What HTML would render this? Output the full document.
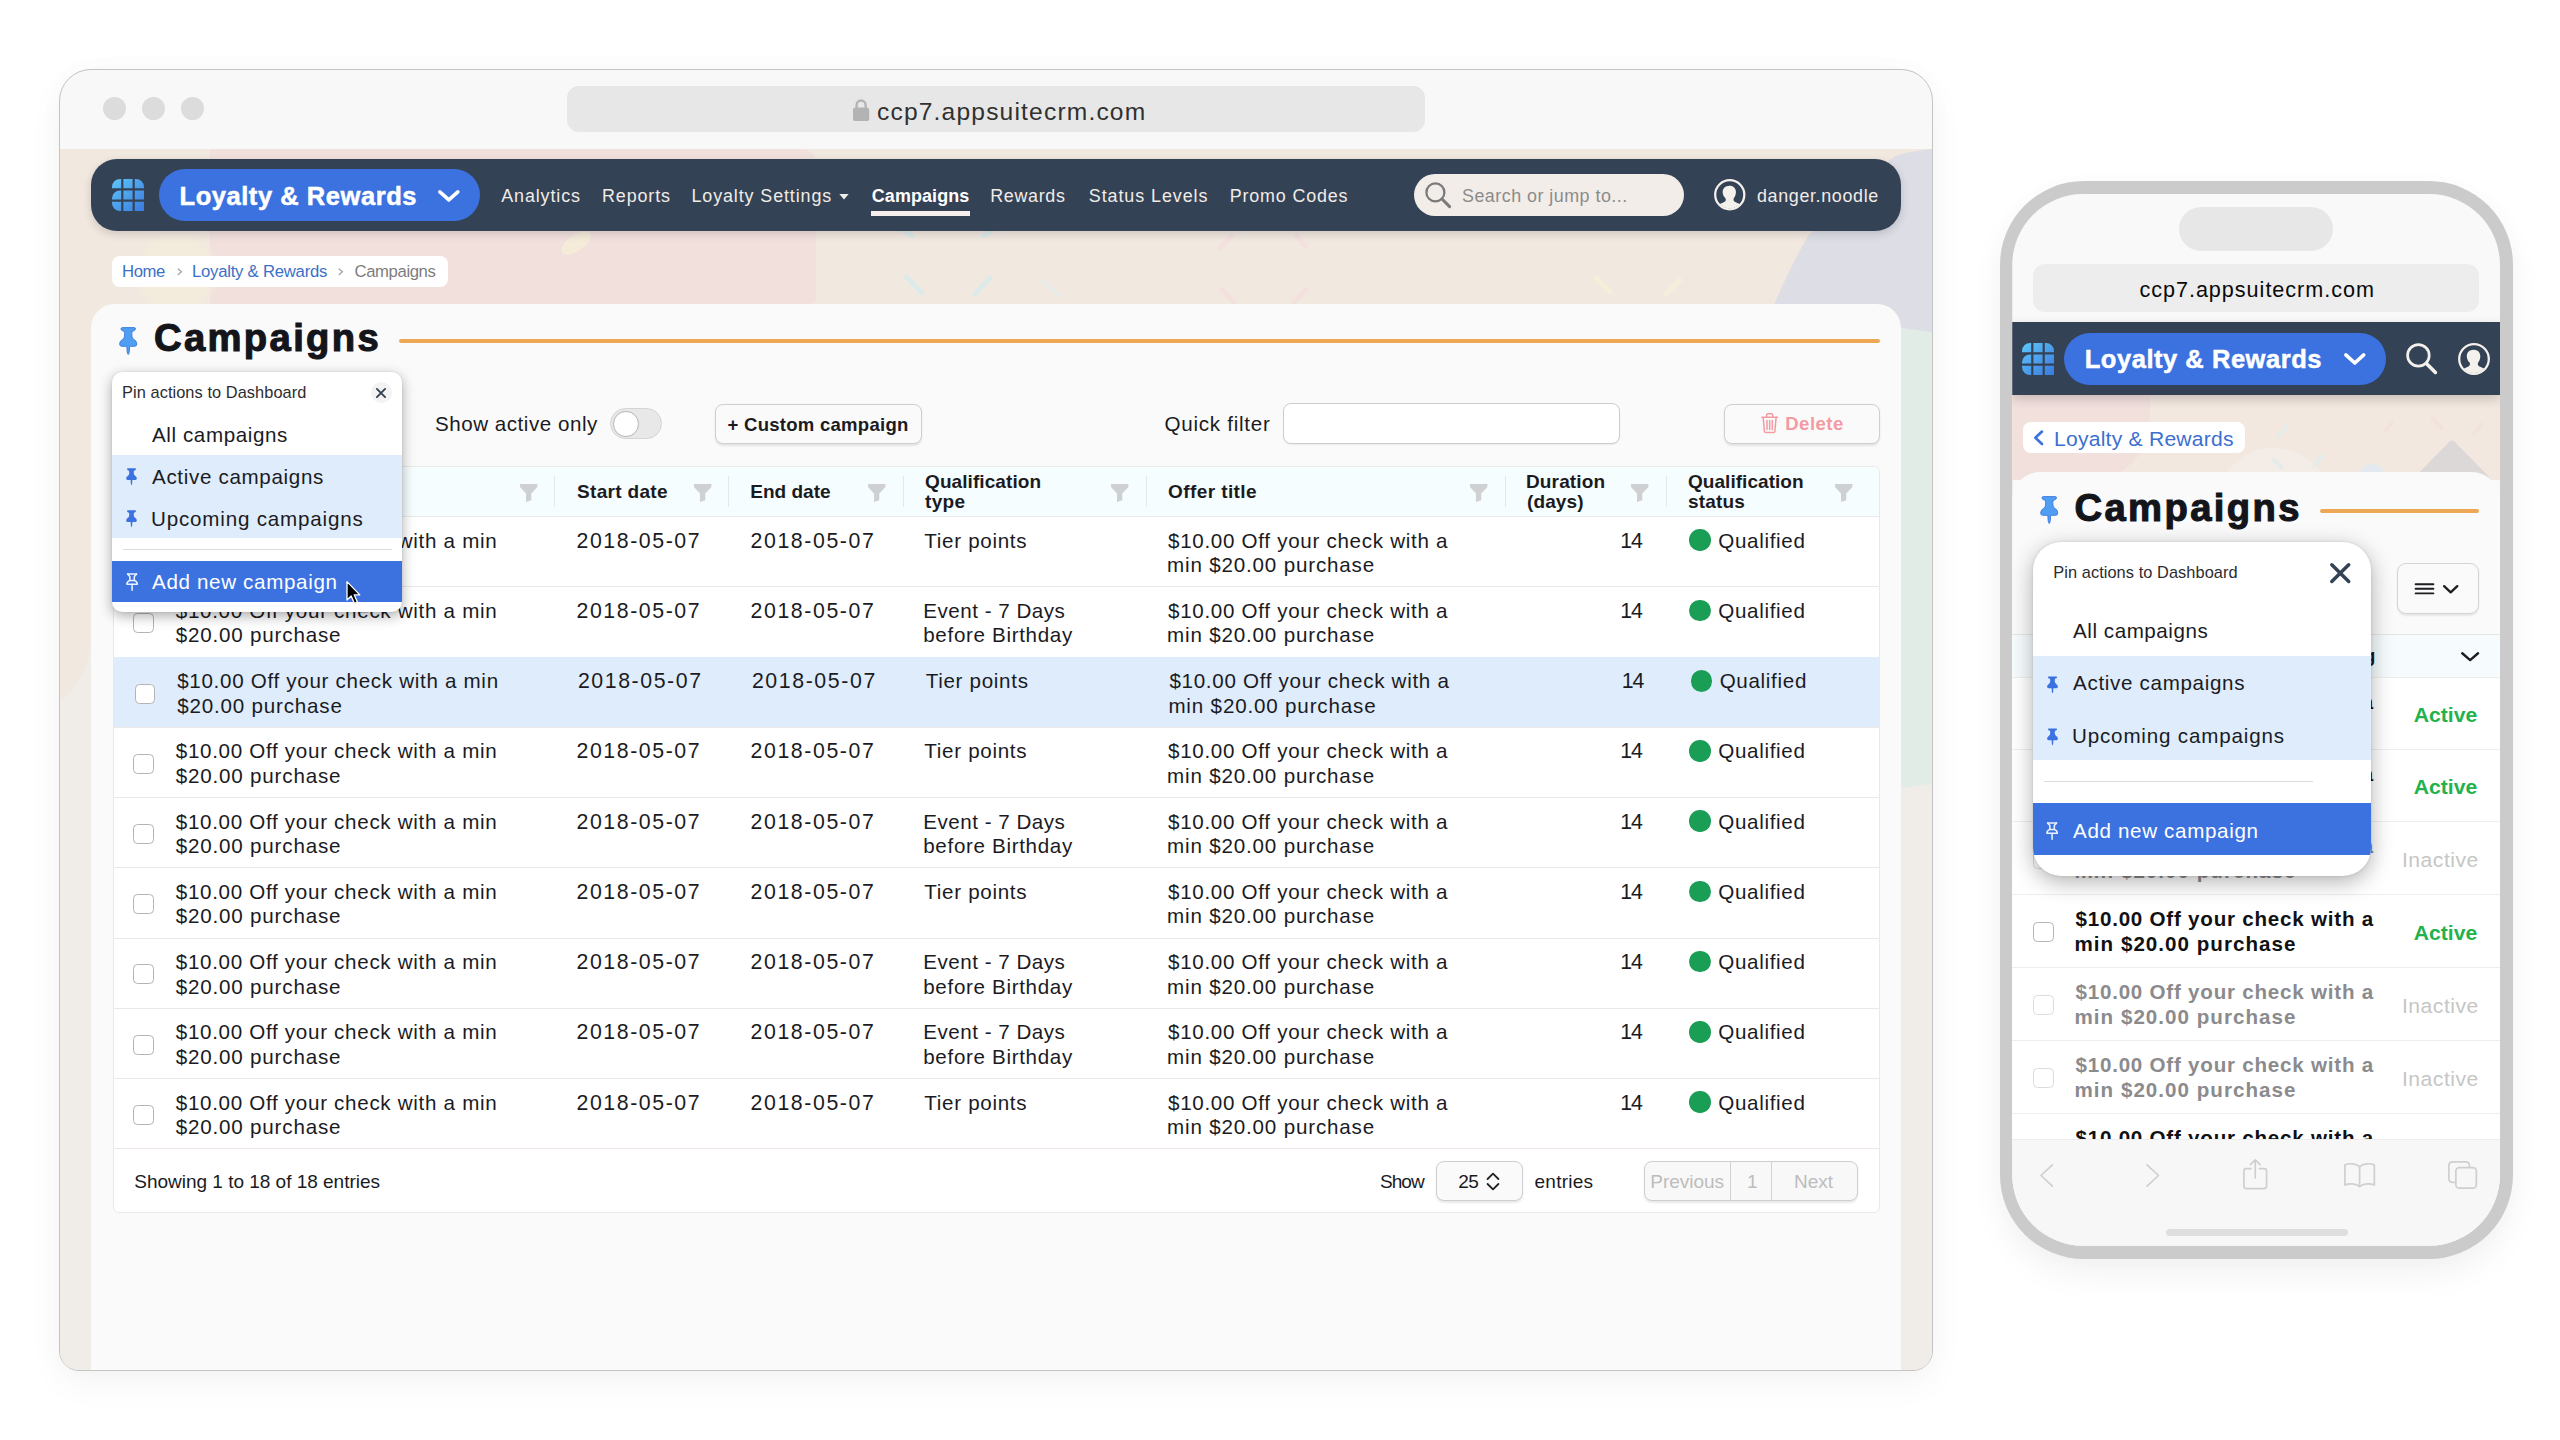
<!DOCTYPE html>
<html lang="en"><head><meta charset="utf-8"><title>Campaigns - Loyalty &amp; Rewards</title>
<style>
html,body{margin:0;padding:0;background:#fff;}
body{width:2560px;height:1440px;position:relative;overflow:hidden;font-family:"Liberation Sans",sans-serif;color:#1b1b1f;}
.b{position:absolute;box-sizing:border-box;}
.t{position:absolute;white-space:pre;line-height:1;}
svg{overflow:visible;display:block;}
</style></head><body>

<div class="b" style="left:59px;top:69px;width:1874px;height:1302px;border-radius:32px 32px 20px 20px;background:#f8f8f8;border:1.3px solid #c4c4c4;box-shadow:0 12px 36px rgba(0,0,0,.045),0 0 30px rgba(0,0,0,.02);overflow:hidden;">
<div class="b" style="left:-0.20px;top:78.80px;width:1873.00px;height:1222.00px;background:#f1e8df;"></div>
<svg class="b" style="left:-60.2px;top:-70.2px" width="1940" height="1380" viewBox="0 0 1940 1380"><path d="M60,700 C75,690 88,670 92,640 V1371 H60 Z" fill="#f0ece7"/><path d="M210,149 H800 Q816,149 816,165 V300 Q812,305 808,305 H210 Z" fill="#f2e0dd"/><defs><radialGradient id="yg"><stop offset="0.75" stop-color="#f3ecdc"/><stop offset="1" stop-color="#f3ecdc" stop-opacity="0"/></radialGradient></defs><circle cx="176" cy="274" r="44" fill="url(#yg)"/><ellipse cx="576" cy="243" rx="17" ry="8" transform="rotate(-35 576 243)" fill="#f4ecd9"/><g stroke="#dcebea" stroke-width="5" stroke-linecap="round"><path d="M906,277 L922,293"/><path d="M990,278 L975,294"/><path d="M905,232 L912,236"/><path d="M990,232 L984,236"/></g><g stroke="#e3ecea" stroke-width="2.5" stroke-linecap="round"><path d="M1043,281 L1060,297"/></g><g stroke="#f3e0df" stroke-width="5" stroke-linecap="round"><path d="M1232,235 L1220,248"/><path d="M1296,235 L1306,246"/><path d="M1222,290 L1234,302"/><path d="M1306,290 L1294,302"/></g><g stroke="#f6eedb" stroke-width="5" stroke-linecap="round"><path d="M1596,278 L1610,292"/><path d="M1680,280 L1666,294"/></g><path d="M1940,149 H1932 C1905,152 1896,155 1893,158 C1850,189 1825,219 1808,236 C1795,259 1785,279 1774,305 V349 H1940 Z" fill="#dddde5"/><path d="M1895,327 L1940,333 V783 L1895,789 Z" fill="#e2ece7"/><path d="M1895,789 L1940,783 V1380 H1895 Z" fill="#f0ece7"/></svg>
</div>
<div class="b" style="left:103.00px;top:97.25px;width:23.00px;height:23.00px;background:#dcdcdc;border-radius:50%;"></div>
<div class="b" style="left:142.00px;top:97.25px;width:23.00px;height:23.00px;background:#dcdcdc;border-radius:50%;"></div>
<div class="b" style="left:181.00px;top:97.25px;width:23.00px;height:23.00px;background:#dcdcdc;border-radius:50%;"></div>
<div class="b" style="left:567.00px;top:85.75px;width:857.50px;height:46.25px;background:#e7e7e7;border-radius:12px;"></div>
<svg class="b" style="left:852.60px;top:99.00px;" width="16.20" height="22.00" viewBox="0 0 16.2 22"><path d="M3.6,9 V6 A4.5,4.5 0 0 1 12.6,6 V9" fill="none" stroke="#b3b3b3" stroke-width="2.3"/><rect x="0" y="8.6" width="16.2" height="13.4" rx="2.6" fill="#b3b3b3"/></svg>
<span class="t" id="t0" style="left:877.00px;top:100.00px;font-size:24.6px;color:#303030;letter-spacing:1.166px;">ccp7.appsuitecrm.com</span>
<div class="b" style="left:91.00px;top:158.75px;width:1809.50px;height:72.00px;background:#344256;border-radius:26px;box-shadow:0 3px 8px rgba(30,30,40,.17);"></div>
<svg class="b" style="left:111.90px;top:179.00px;" width="32.00" height="32.00" viewBox="0 0 32 32"><defs><linearGradient id="gg111" x1="0" y1="0" x2="1" y2="1"><stop offset="0" stop-color="#5fc6f8"/><stop offset="1" stop-color="#3a7ae0"/></linearGradient></defs><path d="M8.0,0.0 H9.2 V9.2 H0.0 V8.0 A8,8 0 0 1 8.0,0.0 Z M11.399999999999999,0.0 H20.599999999999998 V9.2 H11.399999999999999 V0.0 Z M22.799999999999997,0.0 H23.999999999999996 A8,8 0 0 1 31.999999999999996,8.0 V9.2 H22.799999999999997 V0.0 Z M8.0,11.399999999999999 H9.2 V20.599999999999998 H0.0 V19.4 A8,8 0 0 1 8.0,11.399999999999999 Z M11.399999999999999,11.399999999999999 H20.599999999999998 V20.599999999999998 H11.399999999999999 V11.399999999999999 Z M22.799999999999997,11.399999999999999 H31.999999999999996 V20.599999999999998 H22.799999999999997 V11.399999999999999 Z M0.0,22.799999999999997 H9.2 V31.999999999999996 H8.0 A8,8 0 0 1 0.0,23.999999999999996 V22.799999999999997 Z M11.399999999999999,22.799999999999997 H20.599999999999998 V31.999999999999996 H11.399999999999999 V22.799999999999997 Z M22.799999999999997,22.799999999999997 H31.999999999999996 V31.999999999999996 H22.799999999999997 V22.799999999999997 Z" fill="url(#gg111)"/></svg>
<div class="b" style="left:159.00px;top:169.00px;width:321.00px;height:52.25px;background:#3b72df;border-radius:26.2px;"></div>
<span class="t" id="t1" style="left:179.50px;top:184.00px;font-size:25.5px;font-weight:700;color:#fff;letter-spacing:0.549px;-webkit-text-stroke:0.5px #fff;">Loyalty &amp; Rewards</span>
<svg class="b" style="left:434.90px;top:186.90px;" width="27.70" height="18.20" viewBox="-3.6 -3.6 27.7 18.2"><path d="M1.26,1.26 L10.25,9.2 L19.24,1.26" fill="none" stroke="#fff" stroke-width="3.6" stroke-linecap="round" stroke-linejoin="round"/></svg>
<span class="t" id="t2" style="left:501.25px;top:188.00px;font-size:17.92px;color:#f1ece7;letter-spacing:0.881px;">Analytics</span>
<span class="t" id="t3" style="left:602.00px;top:188.00px;font-size:17.92px;color:#f1ece7;letter-spacing:0.876px;">Reports</span>
<span class="t" id="t4" style="left:691.50px;top:188.00px;font-size:17.92px;color:#f1ece7;letter-spacing:0.886px;">Loyalty Settings</span>
<svg class="b" style="left:839.25px;top:193.90px;" width="10.00" height="5.60" viewBox="0 0 10 5.6"><path d="M0.3,0 H9.7 L5,5.6 Z" fill="#f1ece7"/></svg>
<span class="t" id="t5" style="left:871.75px;top:188.00px;font-size:17.92px;font-weight:700;color:#fff;letter-spacing:0.118px;">Campaigns</span>
<div class="b" style="left:871.00px;top:210.90px;width:99.00px;height:4.70px;background:#f6efee;"></div>
<span class="t" id="t6" style="left:990.25px;top:188.00px;font-size:17.92px;color:#f1ece7;letter-spacing:0.675px;">Rewards</span>
<span class="t" id="t7" style="left:1088.75px;top:188.00px;font-size:17.92px;color:#f1ece7;letter-spacing:0.934px;">Status Levels</span>
<span class="t" id="t8" style="left:1229.75px;top:188.00px;font-size:17.92px;color:#f1ece7;letter-spacing:0.823px;">Promo Codes</span>
<div class="b" style="left:1414.25px;top:174.00px;width:269.50px;height:42.00px;background:#f2ede9;border-radius:21px;"></div>
<svg class="b" style="left:1425.00px;top:182.00px;" width="26.00" height="26.00" viewBox="0 0 26 26"><circle cx="10.4" cy="10.4" r="9" fill="none" stroke="#7a7a7a" stroke-width="2.3"/><path d="M17,17 L24.6,24.6" stroke="#7a7a7a" stroke-width="3" stroke-linecap="round"/></svg>
<span class="t" id="t9" style="left:1462.00px;top:188.00px;font-size:17.92px;color:#8d8b89;letter-spacing:0.472px;">Search or jump to...</span>
<svg class="b" style="left:1714.30px;top:179.40px;" width="31.50" height="31.50" viewBox="0 0 32 32"><circle cx="16" cy="16" r="14.8" fill="#344256" stroke="#f4f0ec" stroke-width="2.3"/><clipPath id="uc1714"><circle cx="16" cy="16" r="14"/></clipPath><g clip-path="url(#uc1714)" fill="#f4f0ec"><path d="M15.6,6.8 C19.5,6.6 22.4,9.5 22.3,13.5 C22.2,16.5 21,18.5 20,19.8 C19.6,21.5 20,22.6 21.5,23.4 L26,25.4 C27,26 27.5,27 27.5,31 H4.5 C4.5,27 5,26 6,25.4 L10.5,23.4 C12,22.6 12.2,21.5 11.8,19.8 C10.4,18.5 8.9,16.5 8.8,13.5 C8.7,9.5 11.5,6.9 15.6,6.8 Z"/></g></svg>
<span class="t" id="t10" style="left:1757.00px;top:188.00px;font-size:17.92px;color:#f1ece7;letter-spacing:0.641px;">danger.noodle</span>
<div class="b" style="left:112.00px;top:256.25px;width:335.50px;height:30.75px;background:#fff;border-radius:8px;"></div>
<span class="t" id="t11" style="left:122.00px;top:264.00px;font-size:16.69px;color:#3b6fc6;letter-spacing:-0.411px;">Home</span>
<svg class="b" style="left:176.80px;top:268.20px;" width="5.40" height="7.60" viewBox="0 0 5.4 7.6"><path d="M0.8,0.7 L4.4,3.8 L0.8,6.9" fill="none" stroke="#a3a3a3" stroke-width="1.3"/></svg>
<span class="t" id="t12" style="left:192.00px;top:264.00px;font-size:16.69px;color:#3b6fc6;letter-spacing:-0.236px;">Loyalty &amp; Rewards</span>
<svg class="b" style="left:338.00px;top:268.20px;" width="5.40" height="7.60" viewBox="0 0 5.4 7.6"><path d="M0.8,0.7 L4.4,3.8 L0.8,6.9" fill="none" stroke="#a3a3a3" stroke-width="1.3"/></svg>
<span class="t" id="t13" style="left:354.50px;top:264.00px;font-size:16.69px;color:#7d7d7d;letter-spacing:-0.383px;">Campaigns</span>
<div class="b" style="left:91.25px;top:304.00px;width:1809.25px;height:1066.20px;background:#fafafa;border-radius:24px 24px 0 0;"></div>
<svg class="b" style="left:119.00px;top:326.90px;" width="18.45" height="28.10" viewBox="-0.6 -0.6 18.4 28.2"><path d="M3,0 H14.5 Q16.2,0 15.8,1.6 Q15.4,3 13.6,3.4 Q12.1,3.7 12.2,6 L12.4,9 Q12.6,11 14.5,12 Q17.2,13.5 17.2,16.5 Q17.2,18.8 15,18.8 H10 L9.7,24 Q9.1,27 8.6,27 Q8.1,27 7.5,24 L7.2,18.8 H2.2 Q0,18.8 0,16.5 Q0,13.5 2.7,12 Q4.6,11 4.8,9 L5,6 Q5.1,3.7 3.6,3.4 Q1.8,3 1.4,1.6 Q1,0 3,0 Z" fill="#4f9ef1" stroke="#3b78e0" stroke-width="0.9" stroke-linejoin="round"/></svg>
<span class="t" id="t14" style="left:154.00px;top:319.00px;font-size:38.2px;font-weight:700;color:#14141b;letter-spacing:2.363px;-webkit-text-stroke:1.1px #14141b;">Campaigns</span>
<div class="b" style="left:399.25px;top:339.30px;width:1480.75px;height:3.80px;background:#eda855;border-radius:2px;"></div>
<span class="t" id="t15" style="left:435.00px;top:414.00px;font-size:20.6px;letter-spacing:0.518px;">Show active only</span>
<div class="b" style="left:610.40px;top:408.30px;width:51.40px;height:30.90px;background:#e8e8e8;border-radius:15.5px;border:1.3px solid #d4d4d4;"></div>
<div class="b" style="left:613.20px;top:411.00px;width:25.70px;height:25.70px;background:#fff;border-radius:50%;border:1.2px solid #b4b4b4;"></div>
<div class="b" style="left:714.50px;top:403.75px;width:207.00px;height:40.25px;background:#fafafa;border-radius:8px;border:1.2px solid #cfcfcf;box-shadow:0 1.5px 2px rgba(0,0,0,.09);"></div>
<span class="t" id="t16" style="left:727.50px;top:416.00px;font-size:18.54px;font-weight:700;letter-spacing:0.264px;">+ Custom campaign</span>
<span class="t" id="t17" style="left:1164.50px;top:414.00px;font-size:20.6px;letter-spacing:0.736px;">Quick filter</span>
<div class="b" style="left:1282.50px;top:403.25px;width:337.00px;height:41.00px;background:#fff;border-radius:8px;border:1.2px solid #cdcdcd;box-shadow:0 1px 1.5px rgba(0,0,0,.06);"></div>
<div class="b" style="left:1724.25px;top:403.75px;width:155.25px;height:40.25px;background:#fafafa;border-radius:8px;border:1.2px solid #cfcfcf;box-shadow:0 1.5px 2px rgba(0,0,0,.09);"></div>
<svg class="b" style="left:1761.00px;top:412.90px;" width="17.30" height="20.40" viewBox="0 0 17.3 20.4"><g fill="none" stroke="#f29ba3" stroke-width="1.5" stroke-linecap="round" stroke-linejoin="round"><path d="M0.8,4.3 H16.5"/><path d="M5.6,4 V2.2 Q5.6,0.8 7,0.8 H10.3 Q11.7,0.8 11.7,2.2 V4"/><path d="M2.2,4.6 L3.4,18.2 Q3.5,19.6 4.9,19.6 H12.4 Q13.8,19.6 13.9,18.2 L15.1,4.6"/><path d="M6,7.6 V16.4 M8.65,7.6 V16.4 M11.3,7.6 V16.4"/></g></svg>
<span class="t" id="t18" style="left:1785.25px;top:415.00px;font-size:18.54px;font-weight:700;color:#f29ba3;letter-spacing:0.487px;">Delete</span>
<div class="b" style="left:112.50px;top:466.00px;width:1767.00px;height:746.50px;background:#fff;border-radius:6px;border:1px solid #e9e9e9;"></div>
<div class="b" style="left:113.50px;top:467.00px;width:1765.00px;height:50.20px;background:#f6fdfe;border-radius:5px 5px 0 0;border-bottom:1px solid #e7ebeb;"></div>
<span class="t" id="t19" style="left:577.00px;top:482.00px;font-size:19.05px;font-weight:700;letter-spacing:0.312px;">Start date</span>
<span class="t" id="t20" style="left:750.25px;top:482.00px;font-size:19.05px;font-weight:700;">End date</span>
<span class="t" id="t21" style="left:925.00px;top:472.00px;font-size:19.05px;font-weight:700;letter-spacing:0.072px;">Qualification</span>
<span class="t" id="t22" style="left:925.00px;top:492.00px;font-size:19.05px;font-weight:700;letter-spacing:0.318px;">type</span>
<span class="t" id="t23" style="left:1168.00px;top:482.00px;font-size:19.05px;font-weight:700;letter-spacing:0.399px;">Offer title</span>
<span class="t" id="t24" style="left:1526.00px;top:472.00px;font-size:19.05px;font-weight:700;letter-spacing:0.127px;">Duration</span>
<span class="t" id="t25" style="left:1527.00px;top:492.00px;font-size:19.05px;font-weight:700;letter-spacing:0.107px;">(days)</span>
<span class="t" id="t26" style="left:1688.00px;top:472.00px;font-size:19.05px;font-weight:700;letter-spacing:0.031px;">Qualification</span>
<span class="t" id="t27" style="left:1688.00px;top:492.00px;font-size:19.05px;font-weight:700;letter-spacing:0.156px;">status</span>
<svg class="b" style="left:520.00px;top:483.90px;" width="17.50" height="18.50" viewBox="0 0 17.5 18.5"><path d="M0.4,0 H17 Q17.4,0 17.4,0.6 V3 L11.3,9.6 V16.2 L6,18 V9.6 L0,3 V0.6 Q0,0 0.4,0 Z" fill="#cfd0d2"/></svg>
<svg class="b" style="left:694.00px;top:483.90px;" width="17.50" height="18.50" viewBox="0 0 17.5 18.5"><path d="M0.4,0 H17 Q17.4,0 17.4,0.6 V3 L11.3,9.6 V16.2 L6,18 V9.6 L0,3 V0.6 Q0,0 0.4,0 Z" fill="#cfd0d2"/></svg>
<svg class="b" style="left:868.00px;top:483.90px;" width="17.50" height="18.50" viewBox="0 0 17.5 18.5"><path d="M0.4,0 H17 Q17.4,0 17.4,0.6 V3 L11.3,9.6 V16.2 L6,18 V9.6 L0,3 V0.6 Q0,0 0.4,0 Z" fill="#cfd0d2"/></svg>
<svg class="b" style="left:1111.25px;top:483.90px;" width="17.50" height="18.50" viewBox="0 0 17.5 18.5"><path d="M0.4,0 H17 Q17.4,0 17.4,0.6 V3 L11.3,9.6 V16.2 L6,18 V9.6 L0,3 V0.6 Q0,0 0.4,0 Z" fill="#cfd0d2"/></svg>
<svg class="b" style="left:1469.50px;top:483.90px;" width="17.50" height="18.50" viewBox="0 0 17.5 18.5"><path d="M0.4,0 H17 Q17.4,0 17.4,0.6 V3 L11.3,9.6 V16.2 L6,18 V9.6 L0,3 V0.6 Q0,0 0.4,0 Z" fill="#cfd0d2"/></svg>
<svg class="b" style="left:1630.50px;top:483.90px;" width="17.50" height="18.50" viewBox="0 0 17.5 18.5"><path d="M0.4,0 H17 Q17.4,0 17.4,0.6 V3 L11.3,9.6 V16.2 L6,18 V9.6 L0,3 V0.6 Q0,0 0.4,0 Z" fill="#cfd0d2"/></svg>
<svg class="b" style="left:1835.00px;top:483.90px;" width="17.50" height="18.50" viewBox="0 0 17.5 18.5"><path d="M0.4,0 H17 Q17.4,0 17.4,0.6 V3 L11.3,9.6 V16.2 L6,18 V9.6 L0,3 V0.6 Q0,0 0.4,0 Z" fill="#cfd0d2"/></svg>
<div class="b" style="left:554.00px;top:476.00px;width:1.10px;height:31.00px;background:#e2e9e9;"></div>
<div class="b" style="left:728.25px;top:476.00px;width:1.10px;height:31.00px;background:#e2e9e9;"></div>
<div class="b" style="left:902.50px;top:476.00px;width:1.10px;height:31.00px;background:#e2e9e9;"></div>
<div class="b" style="left:1145.50px;top:476.00px;width:1.10px;height:31.00px;background:#e2e9e9;"></div>
<div class="b" style="left:1504.50px;top:476.00px;width:1.10px;height:31.00px;background:#e2e9e9;"></div>
<div class="b" style="left:1665.75px;top:476.00px;width:1.10px;height:31.00px;background:#e2e9e9;"></div>
<div class="b" style="left:133.25px;top:542.75px;width:20.60px;height:20.20px;background:#fff;border-radius:4.5px;border:1.4px solid #b4b4b4;box-sizing:border-box;"></div>
<span class="t" id="t28" style="left:175.75px;top:531.00px;font-size:20.6px;letter-spacing:0.691px;">$10.00 Off your check with a min</span>
<span class="t" id="t29" style="left:175.75px;top:555.00px;font-size:20.6px;letter-spacing:0.805px;">$20.00 purchase</span>
<span class="t" id="t30" style="left:576.50px;top:531.00px;font-size:21.3px;letter-spacing:1.573px;">2018-05-07</span>
<span class="t" id="t31" style="left:750.50px;top:531.00px;font-size:21.3px;letter-spacing:1.601px;">2018-05-07</span>
<span class="t" id="t32" style="left:924.25px;top:531.00px;font-size:20.6px;letter-spacing:0.692px;">Tier points</span>
<span class="t" id="t33" style="left:1168.00px;top:531.00px;font-size:20.6px;letter-spacing:0.698px;">$10.00 Off your check with a</span>
<span class="t" id="t34" style="left:1167.00px;top:555.00px;font-size:20.6px;letter-spacing:0.826px;">min $20.00 purchase</span>
<span class="t" id="t35" style="left:1620.25px;top:531.00px;font-size:21.3px;letter-spacing:-1.094px;">14</span>
<div class="b" style="left:1689.25px;top:529.25px;width:21.50px;height:21.50px;background:#1a9d55;border-radius:50%;"></div>
<span class="t" id="t36" style="left:1718.25px;top:531.00px;font-size:20.6px;letter-spacing:0.678px;">Qualified</span>
<div class="b" style="left:113.50px;top:586.30px;width:1765.00px;height:1.10px;background:#ece8e5;"></div>
<div class="b" style="left:133.25px;top:613.00px;width:20.60px;height:20.20px;background:#fff;border-radius:4.5px;border:1.4px solid #b4b4b4;box-sizing:border-box;"></div>
<span class="t" id="t37" style="left:175.75px;top:601.00px;font-size:20.6px;letter-spacing:0.691px;">$10.00 Off your check with a min</span>
<span class="t" id="t38" style="left:175.75px;top:625.00px;font-size:20.6px;letter-spacing:0.805px;">$20.00 purchase</span>
<span class="t" id="t39" style="left:576.50px;top:601.00px;font-size:21.3px;letter-spacing:1.573px;">2018-05-07</span>
<span class="t" id="t40" style="left:750.50px;top:601.00px;font-size:21.3px;letter-spacing:1.601px;">2018-05-07</span>
<span class="t" id="t41" style="left:923.25px;top:601.00px;font-size:20.6px;letter-spacing:0.499px;">Event - 7 Days</span>
<span class="t" id="t42" style="left:923.25px;top:625.00px;font-size:20.6px;letter-spacing:0.670px;">before Birthday</span>
<span class="t" id="t43" style="left:1168.00px;top:601.00px;font-size:20.6px;letter-spacing:0.698px;">$10.00 Off your check with a</span>
<span class="t" id="t44" style="left:1167.00px;top:625.00px;font-size:20.6px;letter-spacing:0.826px;">min $20.00 purchase</span>
<span class="t" id="t45" style="left:1620.25px;top:601.00px;font-size:21.3px;letter-spacing:-1.094px;">14</span>
<div class="b" style="left:1689.25px;top:599.50px;width:21.50px;height:21.50px;background:#1a9d55;border-radius:50%;"></div>
<span class="t" id="t46" style="left:1718.25px;top:601.00px;font-size:20.6px;letter-spacing:0.678px;">Qualified</span>
<div class="b" style="left:113.50px;top:657.25px;width:1765.00px;height:70.10px;background:#deecfc;"></div>
<div class="b" style="left:134.65px;top:683.65px;width:20.60px;height:20.20px;background:#fff;border-radius:4.5px;border:1.4px solid #b4b4b4;box-sizing:border-box;"></div>
<span class="t" id="t47" style="left:177.15px;top:671.00px;font-size:20.6px;letter-spacing:0.691px;">$10.00 Off your check with a min</span>
<span class="t" id="t48" style="left:177.15px;top:696.00px;font-size:20.6px;letter-spacing:0.805px;">$20.00 purchase</span>
<span class="t" id="t49" style="left:577.90px;top:671.00px;font-size:21.3px;letter-spacing:1.573px;">2018-05-07</span>
<span class="t" id="t50" style="left:751.90px;top:671.00px;font-size:21.3px;letter-spacing:1.601px;">2018-05-07</span>
<span class="t" id="t51" style="left:925.65px;top:671.00px;font-size:20.6px;letter-spacing:0.692px;">Tier points</span>
<span class="t" id="t52" style="left:1169.40px;top:671.00px;font-size:20.6px;letter-spacing:0.698px;">$10.00 Off your check with a</span>
<span class="t" id="t53" style="left:1168.40px;top:696.00px;font-size:20.6px;letter-spacing:0.826px;">min $20.00 purchase</span>
<span class="t" id="t54" style="left:1621.65px;top:671.00px;font-size:21.3px;letter-spacing:-1.094px;">14</span>
<div class="b" style="left:1690.65px;top:670.15px;width:21.50px;height:21.50px;background:#1a9d55;border-radius:50%;"></div>
<span class="t" id="t55" style="left:1719.65px;top:671.00px;font-size:20.6px;letter-spacing:0.678px;">Qualified</span>
<div class="b" style="left:113.50px;top:726.80px;width:1765.00px;height:1.10px;background:#ece8e5;"></div>
<div class="b" style="left:133.25px;top:753.50px;width:20.60px;height:20.20px;background:#fff;border-radius:4.5px;border:1.4px solid #b4b4b4;box-sizing:border-box;"></div>
<span class="t" id="t56" style="left:175.75px;top:741.00px;font-size:20.6px;letter-spacing:0.691px;">$10.00 Off your check with a min</span>
<span class="t" id="t57" style="left:175.75px;top:766.00px;font-size:20.6px;letter-spacing:0.805px;">$20.00 purchase</span>
<span class="t" id="t58" style="left:576.50px;top:741.00px;font-size:21.3px;letter-spacing:1.573px;">2018-05-07</span>
<span class="t" id="t59" style="left:750.50px;top:741.00px;font-size:21.3px;letter-spacing:1.601px;">2018-05-07</span>
<span class="t" id="t60" style="left:924.25px;top:741.00px;font-size:20.6px;letter-spacing:0.692px;">Tier points</span>
<span class="t" id="t61" style="left:1168.00px;top:741.00px;font-size:20.6px;letter-spacing:0.698px;">$10.00 Off your check with a</span>
<span class="t" id="t62" style="left:1167.00px;top:766.00px;font-size:20.6px;letter-spacing:0.826px;">min $20.00 purchase</span>
<span class="t" id="t63" style="left:1620.25px;top:741.00px;font-size:21.3px;letter-spacing:-1.094px;">14</span>
<div class="b" style="left:1689.25px;top:740.00px;width:21.50px;height:21.50px;background:#1a9d55;border-radius:50%;"></div>
<span class="t" id="t64" style="left:1718.25px;top:741.00px;font-size:20.6px;letter-spacing:0.678px;">Qualified</span>
<div class="b" style="left:113.50px;top:797.05px;width:1765.00px;height:1.10px;background:#ece8e5;"></div>
<div class="b" style="left:133.25px;top:823.75px;width:20.60px;height:20.20px;background:#fff;border-radius:4.5px;border:1.4px solid #b4b4b4;box-sizing:border-box;"></div>
<span class="t" id="t65" style="left:175.75px;top:812.00px;font-size:20.6px;letter-spacing:0.691px;">$10.00 Off your check with a min</span>
<span class="t" id="t66" style="left:175.75px;top:836.00px;font-size:20.6px;letter-spacing:0.805px;">$20.00 purchase</span>
<span class="t" id="t67" style="left:576.50px;top:812.00px;font-size:21.3px;letter-spacing:1.573px;">2018-05-07</span>
<span class="t" id="t68" style="left:750.50px;top:812.00px;font-size:21.3px;letter-spacing:1.601px;">2018-05-07</span>
<span class="t" id="t69" style="left:923.25px;top:812.00px;font-size:20.6px;letter-spacing:0.499px;">Event - 7 Days</span>
<span class="t" id="t70" style="left:923.25px;top:836.00px;font-size:20.6px;letter-spacing:0.670px;">before Birthday</span>
<span class="t" id="t71" style="left:1168.00px;top:812.00px;font-size:20.6px;letter-spacing:0.698px;">$10.00 Off your check with a</span>
<span class="t" id="t72" style="left:1167.00px;top:836.00px;font-size:20.6px;letter-spacing:0.826px;">min $20.00 purchase</span>
<span class="t" id="t73" style="left:1620.25px;top:812.00px;font-size:21.3px;letter-spacing:-1.094px;">14</span>
<div class="b" style="left:1689.25px;top:810.25px;width:21.50px;height:21.50px;background:#1a9d55;border-radius:50%;"></div>
<span class="t" id="t74" style="left:1718.25px;top:812.00px;font-size:20.6px;letter-spacing:0.678px;">Qualified</span>
<div class="b" style="left:113.50px;top:867.30px;width:1765.00px;height:1.10px;background:#ece8e5;"></div>
<div class="b" style="left:133.25px;top:894.00px;width:20.60px;height:20.20px;background:#fff;border-radius:4.5px;border:1.4px solid #b4b4b4;box-sizing:border-box;"></div>
<span class="t" id="t75" style="left:175.75px;top:882.00px;font-size:20.6px;letter-spacing:0.691px;">$10.00 Off your check with a min</span>
<span class="t" id="t76" style="left:175.75px;top:906.00px;font-size:20.6px;letter-spacing:0.805px;">$20.00 purchase</span>
<span class="t" id="t77" style="left:576.50px;top:882.00px;font-size:21.3px;letter-spacing:1.573px;">2018-05-07</span>
<span class="t" id="t78" style="left:750.50px;top:882.00px;font-size:21.3px;letter-spacing:1.601px;">2018-05-07</span>
<span class="t" id="t79" style="left:924.25px;top:882.00px;font-size:20.6px;letter-spacing:0.692px;">Tier points</span>
<span class="t" id="t80" style="left:1168.00px;top:882.00px;font-size:20.6px;letter-spacing:0.698px;">$10.00 Off your check with a</span>
<span class="t" id="t81" style="left:1167.00px;top:906.00px;font-size:20.6px;letter-spacing:0.826px;">min $20.00 purchase</span>
<span class="t" id="t82" style="left:1620.25px;top:882.00px;font-size:21.3px;letter-spacing:-1.094px;">14</span>
<div class="b" style="left:1689.25px;top:880.50px;width:21.50px;height:21.50px;background:#1a9d55;border-radius:50%;"></div>
<span class="t" id="t83" style="left:1718.25px;top:882.00px;font-size:20.6px;letter-spacing:0.678px;">Qualified</span>
<div class="b" style="left:113.50px;top:937.55px;width:1765.00px;height:1.10px;background:#ece8e5;"></div>
<div class="b" style="left:133.25px;top:964.25px;width:20.60px;height:20.20px;background:#fff;border-radius:4.5px;border:1.4px solid #b4b4b4;box-sizing:border-box;"></div>
<span class="t" id="t84" style="left:175.75px;top:952.00px;font-size:20.6px;letter-spacing:0.691px;">$10.00 Off your check with a min</span>
<span class="t" id="t85" style="left:175.75px;top:977.00px;font-size:20.6px;letter-spacing:0.805px;">$20.00 purchase</span>
<span class="t" id="t86" style="left:576.50px;top:952.00px;font-size:21.3px;letter-spacing:1.573px;">2018-05-07</span>
<span class="t" id="t87" style="left:750.50px;top:952.00px;font-size:21.3px;letter-spacing:1.601px;">2018-05-07</span>
<span class="t" id="t88" style="left:923.25px;top:952.00px;font-size:20.6px;letter-spacing:0.499px;">Event - 7 Days</span>
<span class="t" id="t89" style="left:923.25px;top:977.00px;font-size:20.6px;letter-spacing:0.670px;">before Birthday</span>
<span class="t" id="t90" style="left:1168.00px;top:952.00px;font-size:20.6px;letter-spacing:0.698px;">$10.00 Off your check with a</span>
<span class="t" id="t91" style="left:1167.00px;top:977.00px;font-size:20.6px;letter-spacing:0.826px;">min $20.00 purchase</span>
<span class="t" id="t92" style="left:1620.25px;top:952.00px;font-size:21.3px;letter-spacing:-1.094px;">14</span>
<div class="b" style="left:1689.25px;top:950.75px;width:21.50px;height:21.50px;background:#1a9d55;border-radius:50%;"></div>
<span class="t" id="t93" style="left:1718.25px;top:952.00px;font-size:20.6px;letter-spacing:0.678px;">Qualified</span>
<div class="b" style="left:113.50px;top:1007.80px;width:1765.00px;height:1.10px;background:#ece8e5;"></div>
<div class="b" style="left:133.25px;top:1034.50px;width:20.60px;height:20.20px;background:#fff;border-radius:4.5px;border:1.4px solid #b4b4b4;box-sizing:border-box;"></div>
<span class="t" id="t94" style="left:175.75px;top:1022.00px;font-size:20.6px;letter-spacing:0.691px;">$10.00 Off your check with a min</span>
<span class="t" id="t95" style="left:175.75px;top:1047.00px;font-size:20.6px;letter-spacing:0.805px;">$20.00 purchase</span>
<span class="t" id="t96" style="left:576.50px;top:1022.00px;font-size:21.3px;letter-spacing:1.573px;">2018-05-07</span>
<span class="t" id="t97" style="left:750.50px;top:1022.00px;font-size:21.3px;letter-spacing:1.601px;">2018-05-07</span>
<span class="t" id="t98" style="left:923.25px;top:1022.00px;font-size:20.6px;letter-spacing:0.499px;">Event - 7 Days</span>
<span class="t" id="t99" style="left:923.25px;top:1047.00px;font-size:20.6px;letter-spacing:0.670px;">before Birthday</span>
<span class="t" id="t100" style="left:1168.00px;top:1022.00px;font-size:20.6px;letter-spacing:0.698px;">$10.00 Off your check with a</span>
<span class="t" id="t101" style="left:1167.00px;top:1047.00px;font-size:20.6px;letter-spacing:0.826px;">min $20.00 purchase</span>
<span class="t" id="t102" style="left:1620.25px;top:1022.00px;font-size:21.3px;letter-spacing:-1.094px;">14</span>
<div class="b" style="left:1689.25px;top:1021.00px;width:21.50px;height:21.50px;background:#1a9d55;border-radius:50%;"></div>
<span class="t" id="t103" style="left:1718.25px;top:1022.00px;font-size:20.6px;letter-spacing:0.678px;">Qualified</span>
<div class="b" style="left:113.50px;top:1078.05px;width:1765.00px;height:1.10px;background:#ece8e5;"></div>
<div class="b" style="left:133.25px;top:1104.75px;width:20.60px;height:20.20px;background:#fff;border-radius:4.5px;border:1.4px solid #b4b4b4;box-sizing:border-box;"></div>
<span class="t" id="t104" style="left:175.75px;top:1093.00px;font-size:20.6px;letter-spacing:0.691px;">$10.00 Off your check with a min</span>
<span class="t" id="t105" style="left:175.75px;top:1117.00px;font-size:20.6px;letter-spacing:0.805px;">$20.00 purchase</span>
<span class="t" id="t106" style="left:576.50px;top:1093.00px;font-size:21.3px;letter-spacing:1.573px;">2018-05-07</span>
<span class="t" id="t107" style="left:750.50px;top:1093.00px;font-size:21.3px;letter-spacing:1.601px;">2018-05-07</span>
<span class="t" id="t108" style="left:924.25px;top:1093.00px;font-size:20.6px;letter-spacing:0.692px;">Tier points</span>
<span class="t" id="t109" style="left:1168.00px;top:1093.00px;font-size:20.6px;letter-spacing:0.698px;">$10.00 Off your check with a</span>
<span class="t" id="t110" style="left:1167.00px;top:1117.00px;font-size:20.6px;letter-spacing:0.826px;">min $20.00 purchase</span>
<span class="t" id="t111" style="left:1620.25px;top:1093.00px;font-size:21.3px;letter-spacing:-1.094px;">14</span>
<div class="b" style="left:1689.25px;top:1091.25px;width:21.50px;height:21.50px;background:#1a9d55;border-radius:50%;"></div>
<span class="t" id="t112" style="left:1718.25px;top:1093.00px;font-size:20.6px;letter-spacing:0.678px;">Qualified</span>
<div class="b" style="left:113.50px;top:1148.40px;width:1765.00px;height:1.10px;background:#efe7e3;"></div>
<span class="t" id="t113" style="left:134.25px;top:1172.00px;font-size:19.05px;letter-spacing:-0.027px;">Showing 1 to 18 of 18 entries</span>
<span class="t" id="t114" style="left:1380.00px;top:1172.00px;font-size:19.05px;letter-spacing:-0.954px;">Show</span>
<div class="b" style="left:1435.75px;top:1160.50px;width:87.50px;height:40.25px;background:#fafafa;border-radius:8px;border:1.2px solid #cfcfcf;box-shadow:0 1.5px 2px rgba(0,0,0,.09);"></div>
<span class="t" id="t115" style="left:1458.25px;top:1172.00px;font-size:19.05px;letter-spacing:-0.584px;">25</span>
<svg class="b" style="left:1486.00px;top:1172.00px;" width="14.00" height="19.00" viewBox="0 0 14 19"><path d="M1.6,7 L7,1.6 L12.4,7 M1.6,12 L7,17.4 L12.4,12" fill="none" stroke="#222" stroke-width="1.8" stroke-linecap="round" stroke-linejoin="round"/></svg>
<span class="t" id="t116" style="left:1534.50px;top:1172.00px;font-size:19.05px;letter-spacing:0.232px;">entries</span>
<div class="b" style="left:1643.75px;top:1160.50px;width:214.50px;height:40.25px;background:#f8f8f8;border-radius:8px;border:1.2px solid #cfcfcf;box-shadow:0 1.5px 2px rgba(0,0,0,.09);"></div>
<div class="b" style="left:1730.20px;top:1161.50px;width:1.30px;height:38.30px;background:#d2d2d2;"></div>
<div class="b" style="left:1771.00px;top:1161.50px;width:1.30px;height:38.30px;background:#d2d2d2;"></div>
<span class="t" id="t117" style="left:1650.25px;top:1172.00px;font-size:19.05px;color:#bdbdbd;letter-spacing:-0.040px;">Previous</span>
<span class="t" id="t118" style="left:1747.00px;top:1172.00px;font-size:19.05px;color:#bdbdbd;">1</span>
<span class="t" id="t119" style="left:1794.00px;top:1172.00px;font-size:19.05px;color:#bdbdbd;letter-spacing:-0.031px;">Next</span>
<div class="b" style="left:112.00px;top:372.00px;width:290.00px;height:240.00px;background:#fff;border-radius:10px;box-shadow:0 4px 13px rgba(0,0,0,.33),0 0 2px rgba(0,0,0,.12);overflow:hidden;"><div class="b" style="left:0;top:83px;width:290px;height:83px;background:#deecfc"></div><div class="b" style="left:0;top:188.5px;width:290px;height:41.5px;background:#3b72df"></div><div class="b" style="left:11px;top:177px;width:268.5px;height:1.2px;background:#dcdcdc"></div></div>
<span class="t" id="t120" style="left:122.00px;top:384.00px;font-size:16.38px;color:#2c2c30;letter-spacing:0.068px;">Pin actions to Dashboard</span>
<div class="b" style="left:370.50px;top:382.00px;width:21.00px;height:21.00px;background:#f3f3f3;border-radius:50%;"></div>
<svg class="b" style="left:376.00px;top:387.50px;" width="10.00" height="10.00" viewBox="0 0 10 10"><path d="M0.9,0.9 L9.1,9.1 M9.1,0.9 L0.9,9.1" stroke="#344256" stroke-width="1.9" stroke-linecap="round"/></svg>
<span class="t" id="t121" style="left:152.00px;top:425.00px;font-size:20.6px;letter-spacing:0.592px;">All campaigns</span>
<svg class="b" style="left:125.00px;top:468.00px;" width="13.00" height="17.50" viewBox="-0.6 -0.6 18.4 28.2"><path d="M3,0 H14.5 Q16.2,0 15.8,1.6 Q15.4,3 13.6,3.4 Q12.1,3.7 12.2,6 L12.4,9 Q12.6,11 14.5,12 Q17.2,13.5 17.2,16.5 Q17.2,18.8 15,18.8 H10 L9.7,24 Q9.1,27 8.6,27 Q8.1,27 7.5,24 L7.2,18.8 H2.2 Q0,18.8 0,16.5 Q0,13.5 2.7,12 Q4.6,11 4.8,9 L5,6 Q5.1,3.7 3.6,3.4 Q1.8,3 1.4,1.6 Q1,0 3,0 Z" fill="#3b72df"/></svg>
<span class="t" id="t122" style="left:152.00px;top:467.00px;font-size:20.6px;letter-spacing:0.660px;">Active campaigns</span>
<svg class="b" style="left:125.00px;top:509.75px;" width="13.00" height="17.50" viewBox="-0.6 -0.6 18.4 28.2"><path d="M3,0 H14.5 Q16.2,0 15.8,1.6 Q15.4,3 13.6,3.4 Q12.1,3.7 12.2,6 L12.4,9 Q12.6,11 14.5,12 Q17.2,13.5 17.2,16.5 Q17.2,18.8 15,18.8 H10 L9.7,24 Q9.1,27 8.6,27 Q8.1,27 7.5,24 L7.2,18.8 H2.2 Q0,18.8 0,16.5 Q0,13.5 2.7,12 Q4.6,11 4.8,9 L5,6 Q5.1,3.7 3.6,3.4 Q1.8,3 1.4,1.6 Q1,0 3,0 Z" fill="#3b72df"/></svg>
<span class="t" id="t123" style="left:151.00px;top:509.00px;font-size:20.6px;letter-spacing:0.810px;">Upcoming campaigns</span>
<svg class="b" style="left:125.70px;top:573.00px;" width="12.20" height="18.00" viewBox="0 0 12.2 18"><g fill="none" stroke="#eaf1ff" stroke-width="1.55" stroke-linecap="round" stroke-linejoin="round"><path d="M1.6,1 H10.6"/><path d="M1.7,1.1 L3.9,3.5 V7.4 M10.5,1.1 L8.3,3.5 V7.4"/><path d="M0.9,11.3 C0.9,9 2.6,7.9 3.9,7.4 H8.3 C9.6,7.9 11.3,9 11.3,11.3 Z"/><path d="M6.1,11.6 V17.2"/></g></svg>
<span class="t" id="t124" style="left:152.00px;top:572.00px;font-size:20.6px;color:#fff;letter-spacing:0.653px;">Add new campaign</span>
<svg class="b" style="left:346.00px;top:581.00px;" width="15.00" height="23.00" viewBox="0 0 15 23"><path d="M1,0.6 V19 L5.2,15 L8.4,22.4 L11.4,21.1 L8.3,13.9 H13.8 Z" fill="#000" stroke="#fff" stroke-width="1.3" stroke-linejoin="round"/></svg>
<div class="b" style="left:1999.50px;top:181.25px;width:513.50px;height:1077.50px;background:#cbcbcb;border-radius:84px;box-shadow:0 16px 32px rgba(0,0,0,.05),0 0 24px rgba(0,0,0,.015);"></div>
<div class="b" style="left:0;top:0;width:2560px;height:1440px;clip-path:inset(194px 60px 194.25px 2012.25px round 71px);">
<div class="b" style="left:2012.25px;top:194.00px;width:487.75px;height:1051.75px;background:#f9f9f9;"></div>
<div class="b" style="left:2178.75px;top:207.25px;width:154.65px;height:43.75px;background:#e7e7e7;border-radius:22px;"></div>
<div class="b" style="left:2033.00px;top:264.40px;width:446.00px;height:47.50px;background:#ededed;border-radius:12px;"></div>
<span class="t" id="t125" style="left:2139.40px;top:279.00px;font-size:21.6px;color:#0a0a0a;letter-spacing:0.977px;">ccp7.appsuitecrm.com</span>
<div class="b" style="left:2012.25px;top:394.00px;width:487.75px;height:86.00px;background:#f2e8df;"></div>
<div class="b" style="left:2012.25px;top:394.00px;width:137.75px;height:86.00px;background:#f2e0dd;border-radius:0 0 60px 0;"></div>
<svg class="b" style="left:2012.00px;top:394.00px;" width="488.00" height="86.00" viewBox="0 0 488 86"><circle cx="262" cy="112" r="58" fill="#f4ede7"/><circle cx="360" cy="84" r="14" fill="#e3e9ee"/><g stroke="#e2ecea" stroke-width="3.5" stroke-linecap="round"><path d="M222,34 L232,44"/><path d="M275,32 L266,43"/><path d="M262,66 L270,74"/><path d="M310,62 L302,72"/></g><g stroke="#f2e1dd" stroke-width="3.5" stroke-linecap="round"><path d="M420,24 L430,34"/><path d="M470,30 L462,40"/><path d="M380,28 L374,36"/></g></svg>
<svg class="b" style="left:2400.00px;top:438.00px;" width="100.00" height="42.00" viewBox="0 0 100 42"><path d="M12,42 L49,4 Q52,1 55,4 L92,42 Z" fill="#dcd8d7"/></svg>
<div class="b" style="left:2012.25px;top:322.00px;width:487.75px;height:72.50px;background:#344256;box-shadow:0 4px 10px rgba(30,30,40,.20);"></div>
<svg class="b" style="left:2022.40px;top:342.80px;" width="32.00" height="32.00" viewBox="0 0 32 32"><defs><linearGradient id="gg2022" x1="0" y1="0" x2="1" y2="1"><stop offset="0" stop-color="#5fc6f8"/><stop offset="1" stop-color="#3a7ae0"/></linearGradient></defs><path d="M8.0,0.0 H9.2 V9.2 H0.0 V8.0 A8,8 0 0 1 8.0,0.0 Z M11.399999999999999,0.0 H20.599999999999998 V9.2 H11.399999999999999 V0.0 Z M22.799999999999997,0.0 H23.999999999999996 A8,8 0 0 1 31.999999999999996,8.0 V9.2 H22.799999999999997 V0.0 Z M8.0,11.399999999999999 H9.2 V20.599999999999998 H0.0 V19.4 A8,8 0 0 1 8.0,11.399999999999999 Z M11.399999999999999,11.399999999999999 H20.599999999999998 V20.599999999999998 H11.399999999999999 V11.399999999999999 Z M22.799999999999997,11.399999999999999 H31.999999999999996 V20.599999999999998 H22.799999999999997 V11.399999999999999 Z M0.0,22.799999999999997 H9.2 V31.999999999999996 H8.0 A8,8 0 0 1 0.0,23.999999999999996 V22.799999999999997 Z M11.399999999999999,22.799999999999997 H20.599999999999998 V31.999999999999996 H11.399999999999999 V22.799999999999997 Z M22.799999999999997,22.799999999999997 H31.999999999999996 V31.999999999999996 H22.799999999999997 V22.799999999999997 Z" fill="url(#gg2022)"/></svg>
<div class="b" style="left:2064.25px;top:332.50px;width:321.25px;height:52.10px;background:#3b72df;border-radius:26.2px;"></div>
<span class="t" id="t126" style="left:2084.75px;top:347.00px;font-size:25.5px;font-weight:700;color:#fff;letter-spacing:0.533px;-webkit-text-stroke:0.5px #fff;">Loyalty &amp; Rewards</span>
<svg class="b" style="left:2340.60px;top:350.20px;" width="27.60" height="18.40" viewBox="-3.6 -3.6 27.60000000000009 18.399999999999988"><path d="M1.26,1.26 L10.200000000000045,9.399999999999988 L19.14000000000009,1.26" fill="none" stroke="#fff" stroke-width="3.6" stroke-linecap="round" stroke-linejoin="round"/></svg>
<svg class="b" style="left:2406.25px;top:343.25px;" width="31.50" height="31.50" viewBox="0 0 31.5 31.5"><circle cx="12.4" cy="12.4" r="10.8" fill="none" stroke="#f4f0ec" stroke-width="2.7"/><path d="M20.4,20.4 L29.4,29.4" stroke="#f4f0ec" stroke-width="3.6" stroke-linecap="round"/></svg>
<svg class="b" style="left:2458.00px;top:343.00px;" width="32.00" height="32.00" viewBox="0 0 32 32"><circle cx="16" cy="16" r="14.8" fill="#344256" stroke="#f4f0ec" stroke-width="2.3"/><clipPath id="uc2458"><circle cx="16" cy="16" r="14"/></clipPath><g clip-path="url(#uc2458)" fill="#f4f0ec"><path d="M15.6,6.8 C19.5,6.6 22.4,9.5 22.3,13.5 C22.2,16.5 21,18.5 20,19.8 C19.6,21.5 20,22.6 21.5,23.4 L26,25.4 C27,26 27.5,27 27.5,31 H4.5 C4.5,27 5,26 6,25.4 L10.5,23.4 C12,22.6 12.2,21.5 11.8,19.8 C10.4,18.5 8.9,16.5 8.8,13.5 C8.7,9.5 11.5,6.9 15.6,6.8 Z"/></g></svg>
<div class="b" style="left:2022.50px;top:422.00px;width:222.50px;height:31.00px;background:#fff;border-radius:8px;"></div>
<svg class="b" style="left:2033.00px;top:430.00px;" width="11.00" height="15.60" viewBox="0 0 11 15.6"><path d="M9,1.6 L2.4,7.8 L9,14" fill="none" stroke="#3b72df" stroke-width="2.7" stroke-linecap="round" stroke-linejoin="round"/></svg>
<span class="t" id="t127" style="left:2054.00px;top:428.00px;font-size:21.12px;color:#3b6fd0;letter-spacing:0.223px;">Loyalty &amp; Rewards</span>
<div class="b" style="left:2012.00px;top:472.00px;width:488.00px;height:668.00px;background:#fafafa;border-radius:28px 28px 0 0;"></div>
<svg class="b" style="left:2039.60px;top:495.80px;" width="18.45" height="28.10" viewBox="-0.6 -0.6 18.4 28.2"><path d="M3,0 H14.5 Q16.2,0 15.8,1.6 Q15.4,3 13.6,3.4 Q12.1,3.7 12.2,6 L12.4,9 Q12.6,11 14.5,12 Q17.2,13.5 17.2,16.5 Q17.2,18.8 15,18.8 H10 L9.7,24 Q9.1,27 8.6,27 Q8.1,27 7.5,24 L7.2,18.8 H2.2 Q0,18.8 0,16.5 Q0,13.5 2.7,12 Q4.6,11 4.8,9 L5,6 Q5.1,3.7 3.6,3.4 Q1.8,3 1.4,1.6 Q1,0 3,0 Z" fill="#4f9ef1" stroke="#3b78e0" stroke-width="0.9" stroke-linejoin="round"/></svg>
<span class="t" id="t128" style="left:2074.50px;top:489.00px;font-size:38.2px;font-weight:700;color:#14141b;letter-spacing:2.394px;-webkit-text-stroke:1.1px #14141b;">Campaigns</span>
<div class="b" style="left:2320.00px;top:509.30px;width:158.75px;height:3.90px;background:#eda855;border-radius:2px;"></div>
<div class="b" style="left:2396.75px;top:563.25px;width:82.00px;height:50.50px;background:#fafafa;border-radius:9px;border:1.2px solid #d4d4d4;box-shadow:0 1.5px 2px rgba(0,0,0,.08);"></div>
<svg class="b" style="left:2415.00px;top:583.25px;" width="19.00" height="11.60" viewBox="0 0 19 11.6"><path d="M0.6,1.2 H18.4 M0.6,5.8 H18.4 M0.6,10.4 H18.4" stroke="#1d1d22" stroke-width="1.9" stroke-linecap="round"/></svg>
<svg class="b" style="left:2441.30px;top:582.70px;" width="19.40" height="12.80" viewBox="-2.3 -2.3 19.400000000000183 12.800000000000045"><path d="M0.8049999999999999,0.8049999999999999 L7.400000000000091,7.050000000000045 L13.995000000000182,0.8049999999999999" fill="none" stroke="#1d1d22" stroke-width="2.3" stroke-linecap="round" stroke-linejoin="round"/></svg>
<div class="b" style="left:2012.25px;top:634.00px;width:487.75px;height:506.00px;background:#fff;border-top:1px solid #e6e6e6;"></div>
<div class="b" style="left:2012.25px;top:635.00px;width:487.75px;height:42.20px;background:#f6fcfd;"></div>
<span class="t" id="t129" style="left:2317.00px;top:646.00px;font-size:19.05px;font-weight:700;letter-spacing:-1.231px;">Ending</span>
<svg class="b" style="left:2458.60px;top:650.10px;" width="22.30" height="13.70" viewBox="-2.4 -2.4 22.3 13.699999999999978"><path d="M0.84,0.84 L8.75,7.699999999999977 L16.66,0.84" fill="none" stroke="#1d1d22" stroke-width="2.4" stroke-linecap="round" stroke-linejoin="round"/></svg>
<div class="b" style="left:2012.25px;top:677.00px;width:487.75px;height:1.20px;background:#eeeeee;"></div>
<div class="b" style="left:2033.25px;top:705.00px;width:20.50px;height:20.10px;background:#fff;border-radius:4.5px;border:1.4px solid #b5b5b5;box-sizing:border-box;"></div>
<span class="t" id="t130" style="left:2075.50px;top:692.00px;font-size:20.6px;font-weight:700;color:#111114;letter-spacing:0.768px;">$10.00 Off your check with a</span>
<span class="t" id="t131" style="left:2074.50px;top:717.00px;font-size:20.6px;font-weight:700;color:#111114;letter-spacing:1.019px;">min $20.00 purchase</span>
<span class="t" id="t132" style="left:2413.75px;top:704.00px;font-size:21.12px;font-weight:700;color:#22b24c;letter-spacing:0.026px;">Active</span>
<div class="b" style="left:2012.25px;top:749.00px;width:487.75px;height:1.20px;background:#eeeeee;"></div>
<div class="b" style="left:2033.25px;top:777.00px;width:20.50px;height:20.10px;background:#fff;border-radius:4.5px;border:1.4px solid #b5b5b5;box-sizing:border-box;"></div>
<span class="t" id="t133" style="left:2075.50px;top:764.00px;font-size:20.6px;font-weight:700;color:#111114;letter-spacing:0.768px;">$10.00 Off your check with a</span>
<span class="t" id="t134" style="left:2074.50px;top:789.00px;font-size:20.6px;font-weight:700;color:#111114;letter-spacing:1.019px;">min $20.00 purchase</span>
<span class="t" id="t135" style="left:2413.75px;top:776.00px;font-size:21.12px;font-weight:700;color:#22b24c;letter-spacing:0.026px;">Active</span>
<div class="b" style="left:2012.25px;top:821.00px;width:487.75px;height:1.20px;background:#eeeeee;"></div>
<div class="b" style="left:2033.25px;top:849.00px;width:20.50px;height:20.10px;background:#fff;border-radius:4.5px;border:1.4px solid #dcdcdc;box-sizing:border-box;"></div>
<span class="t" id="t136" style="left:2075.50px;top:836.00px;font-size:20.6px;font-weight:700;color:#8b8b8d;letter-spacing:0.768px;">$10.00 Off your check with a</span>
<span class="t" id="t137" style="left:2074.50px;top:861.00px;font-size:20.6px;font-weight:700;color:#8b8b8d;letter-spacing:1.019px;">min $20.00 purchase</span>
<span class="t" id="t138" style="left:2402.00px;top:849.00px;font-size:21.12px;color:#c6c6c6;letter-spacing:0.499px;">Inactive</span>
<div class="b" style="left:2012.25px;top:894.00px;width:487.75px;height:1.20px;background:#eeeeee;"></div>
<div class="b" style="left:2033.25px;top:922.00px;width:20.50px;height:20.10px;background:#fff;border-radius:4.5px;border:1.4px solid #b5b5b5;box-sizing:border-box;"></div>
<span class="t" id="t139" style="left:2075.50px;top:909.00px;font-size:20.6px;font-weight:700;color:#111114;letter-spacing:0.768px;">$10.00 Off your check with a</span>
<span class="t" id="t140" style="left:2074.50px;top:934.00px;font-size:20.6px;font-weight:700;color:#111114;letter-spacing:1.019px;">min $20.00 purchase</span>
<span class="t" id="t141" style="left:2413.75px;top:922.00px;font-size:21.12px;font-weight:700;color:#22b24c;letter-spacing:0.026px;">Active</span>
<div class="b" style="left:2012.25px;top:967.00px;width:487.75px;height:1.20px;background:#eeeeee;"></div>
<div class="b" style="left:2033.25px;top:995.00px;width:20.50px;height:20.10px;background:#fff;border-radius:4.5px;border:1.4px solid #dcdcdc;box-sizing:border-box;"></div>
<span class="t" id="t142" style="left:2075.50px;top:982.00px;font-size:20.6px;font-weight:700;color:#8b8b8d;letter-spacing:0.768px;">$10.00 Off your check with a</span>
<span class="t" id="t143" style="left:2074.50px;top:1007.00px;font-size:20.6px;font-weight:700;color:#8b8b8d;letter-spacing:1.019px;">min $20.00 purchase</span>
<span class="t" id="t144" style="left:2402.00px;top:995.00px;font-size:21.12px;color:#c6c6c6;letter-spacing:0.499px;">Inactive</span>
<div class="b" style="left:2012.25px;top:1040.00px;width:487.75px;height:1.20px;background:#eeeeee;"></div>
<div class="b" style="left:2033.25px;top:1068.00px;width:20.50px;height:20.10px;background:#fff;border-radius:4.5px;border:1.4px solid #dcdcdc;box-sizing:border-box;"></div>
<span class="t" id="t145" style="left:2075.50px;top:1055.00px;font-size:20.6px;font-weight:700;color:#8b8b8d;letter-spacing:0.768px;">$10.00 Off your check with a</span>
<span class="t" id="t146" style="left:2074.50px;top:1080.00px;font-size:20.6px;font-weight:700;color:#8b8b8d;letter-spacing:1.019px;">min $20.00 purchase</span>
<span class="t" id="t147" style="left:2402.00px;top:1068.00px;font-size:21.12px;color:#c6c6c6;letter-spacing:0.499px;">Inactive</span>
<div class="b" style="left:2012.25px;top:1112.75px;width:487.75px;height:1.20px;background:#eeeeee;"></div>
<div class="b" style="left:2033.25px;top:1140.75px;width:20.50px;height:20.10px;background:#fff;border-radius:4.5px;border:1.4px solid #b5b5b5;box-sizing:border-box;"></div>
<span class="t" id="t148" style="left:2075.50px;top:1128.00px;font-size:20.6px;font-weight:700;color:#111114;letter-spacing:0.768px;">$10.00 Off your check with a</span>
<span class="t" id="t149" style="left:2074.50px;top:1152.00px;font-size:20.6px;font-weight:700;color:#111114;letter-spacing:1.019px;">min $20.00 purchase</span>
<span class="t" id="t150" style="left:2413.75px;top:1140.00px;font-size:21.12px;font-weight:700;color:#22b24c;letter-spacing:0.026px;">Active</span>
<div class="b" style="left:2012.25px;top:1139.25px;width:487.75px;height:106.50px;background:#f7f7f7;border-top:1px solid #ececec;"></div>
<svg class="b" style="left:2040.00px;top:1163.75px;" width="13.25" height="23.00" viewBox="0 0 13.25 23"><path d="M12.4,0.8 L1,11.5 L12.4,22.2" fill="none" stroke="#cfcfcf" stroke-width="1.7" stroke-linecap="round" stroke-linejoin="round"/></svg>
<svg class="b" style="left:2145.75px;top:1163.75px;" width="13.50" height="23.00" viewBox="0 0 13.5 23"><path d="M1,0.8 L12.5,11.5 L1,22.2" fill="none" stroke="#cfcfcf" stroke-width="1.7" stroke-linecap="round" stroke-linejoin="round"/></svg>
<svg class="b" style="left:2243.00px;top:1158.75px;" width="24.50" height="30.50" viewBox="0 0 24.5 30.5"><g fill="none" stroke="#cfcfcf" stroke-width="1.7" stroke-linecap="round" stroke-linejoin="round"><path d="M8,9.6 H3.4 Q0.9,9.6 0.9,12.1 V27.1 Q0.9,29.6 3.4,29.6 H21.1 Q23.6,29.6 23.6,27.1 V12.1 Q23.6,9.6 21.1,9.6 H16.5"/><path d="M12.25,19 V1 M7.4,5.6 L12.25,0.9 L17.1,5.6"/></g></svg>
<svg class="b" style="left:2343.75px;top:1163.00px;" width="31.25" height="24.50" viewBox="0 0 31.25 24.5"><g fill="none" stroke="#cfcfcf" stroke-width="1.7" stroke-linejoin="round"><path d="M15.6,3.6 C12,0.4 5,0 0.9,2 V22 C5,20.2 12,20.4 15.6,23.6 C19.2,20.4 26.2,20.2 30.35,22 V2 C26.2,0 19.2,0.4 15.6,3.6 Z"/><path d="M15.6,3.6 V23.6"/></g></svg>
<svg class="b" style="left:2447.50px;top:1160.75px;" width="29.25" height="28.00" viewBox="0 0 29.25 28"><g fill="#f7f7f7" stroke="#cfcfcf" stroke-width="1.7"><rect x="0.9" y="0.9" width="20.5" height="20.5" rx="3.4"/><rect x="7.85" y="6.6" width="20.5" height="20.5" rx="3.4"/></g></svg>
<div class="b" style="left:2166.25px;top:1228.75px;width:181.75px;height:7.00px;background:#dedede;border-radius:3.5px;"></div>
<div class="b" style="left:2033.00px;top:542.00px;width:338.25px;height:333.50px;background:#fff;border-radius:28px;box-shadow:0 6px 22px rgba(0,0,0,.30),0 0 3px rgba(0,0,0,.12);overflow:hidden;"><div class="b" style="left:0;top:114.2px;width:339px;height:103.8px;background:#deecfc"></div><div class="b" style="left:0;top:261.2px;width:339px;height:51.8px;background:#3b72df"></div><div class="b" style="left:10.75px;top:239.2px;width:268.8px;height:1.2px;background:#dcdcdc"></div></div>
<span class="t" id="t151" style="left:2053.25px;top:564.00px;font-size:16.38px;color:#2c2c30;letter-spacing:0.068px;">Pin actions to Dashboard</span>
<svg class="b" style="left:2329.50px;top:563.00px;" width="20.50" height="20.30" viewBox="0 0 20.5 20.3"><path d="M1.8,1.8 L18.7,18.5 M18.7,1.8 L1.8,18.5" stroke="#344256" stroke-width="3.5" stroke-linecap="round"/></svg>
<span class="t" id="t152" style="left:2073.00px;top:621.00px;font-size:20.6px;letter-spacing:0.550px;">All campaigns</span>
<svg class="b" style="left:2045.75px;top:675.50px;" width="13.00" height="17.75" viewBox="-0.6 -0.6 18.4 28.2"><path d="M3,0 H14.5 Q16.2,0 15.8,1.6 Q15.4,3 13.6,3.4 Q12.1,3.7 12.2,6 L12.4,9 Q12.6,11 14.5,12 Q17.2,13.5 17.2,16.5 Q17.2,18.8 15,18.8 H10 L9.7,24 Q9.1,27 8.6,27 Q8.1,27 7.5,24 L7.2,18.8 H2.2 Q0,18.8 0,16.5 Q0,13.5 2.7,12 Q4.6,11 4.8,9 L5,6 Q5.1,3.7 3.6,3.4 Q1.8,3 1.4,1.6 Q1,0 3,0 Z" fill="#3b72df"/></svg>
<span class="t" id="t153" style="left:2073.00px;top:673.00px;font-size:20.6px;letter-spacing:0.677px;">Active campaigns</span>
<svg class="b" style="left:2045.75px;top:728.00px;" width="13.00" height="17.75" viewBox="-0.6 -0.6 18.4 28.2"><path d="M3,0 H14.5 Q16.2,0 15.8,1.6 Q15.4,3 13.6,3.4 Q12.1,3.7 12.2,6 L12.4,9 Q12.6,11 14.5,12 Q17.2,13.5 17.2,16.5 Q17.2,18.8 15,18.8 H10 L9.7,24 Q9.1,27 8.6,27 Q8.1,27 7.5,24 L7.2,18.8 H2.2 Q0,18.8 0,16.5 Q0,13.5 2.7,12 Q4.6,11 4.8,9 L5,6 Q5.1,3.7 3.6,3.4 Q1.8,3 1.4,1.6 Q1,0 3,0 Z" fill="#3b72df"/></svg>
<span class="t" id="t154" style="left:2072.00px;top:726.00px;font-size:20.6px;letter-spacing:0.825px;">Upcoming campaigns</span>
<svg class="b" style="left:2046.20px;top:821.80px;" width="12.20" height="18.00" viewBox="0 0 12.2 18"><g fill="none" stroke="#eaf1ff" stroke-width="1.55" stroke-linecap="round" stroke-linejoin="round"><path d="M1.6,1 H10.6"/><path d="M1.7,1.1 L3.9,3.5 V7.4 M10.5,1.1 L8.3,3.5 V7.4"/><path d="M0.9,11.3 C0.9,9 2.6,7.9 3.9,7.4 H8.3 C9.6,7.9 11.3,9 11.3,11.3 Z"/><path d="M6.1,11.6 V17.2"/></g></svg>
<span class="t" id="t155" style="left:2073.00px;top:821.00px;font-size:20.6px;color:#fff;letter-spacing:0.653px;">Add new campaign</span>
</div>

</body></html>
